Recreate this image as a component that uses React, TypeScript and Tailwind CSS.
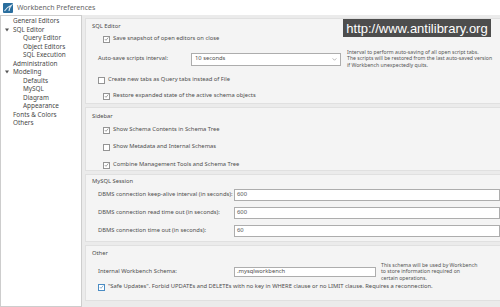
import clsx from 'clsx';

type TreeItem = { label: string; level: 0 | 1; open?: boolean };

const TREE: TreeItem[] = [
  { label: 'General Editors', level: 0 },
  { label: 'SQL Editor', level: 0, open: true },
  { label: 'Query Editor', level: 1 },
  { label: 'Object Editors', level: 1 },
  { label: 'SQL Execution', level: 1 },
  { label: 'Administration', level: 0 },
  { label: 'Modeling', level: 0, open: true },
  { label: 'Defaults', level: 1 },
  { label: 'MySQL', level: 1 },
  { label: 'Diagram', level: 1 },
  { label: 'Appearance', level: 1 },
  { label: 'Fonts & Colors', level: 0 },
  { label: 'Others', level: 0 },
];

function Check({ checked, blue }: { checked?: boolean; blue?: boolean }) {
  return (
    <span
      className={clsx(
        'flex h-[7px] w-[7px] shrink-0 items-center justify-center border bg-white',
        blue ? 'border-[#4a8cc4]' : 'border-[#949494]'
      )}
    >
      {checked && (
        <svg viewBox="0 0 8 8" className="h-[6px] w-[6px]">
          <path d="M1.3 4.1 L3.2 6.1 L6.9 1.5" fill="none" stroke={blue ? '#3a76ad' : '#5a5a5a'} strokeWidth="0.9" />
        </svg>
      )}
    </span>
  );
}

function CheckRow({ label, checked, blue, indent }: { label: string; checked?: boolean; blue?: boolean; indent?: boolean }) {
  return (
    <div className={clsx('flex h-[10px] items-center gap-[3px]', indent ? 'pl-[17px]' : 'pl-[12px]')}>
      <Check checked={checked} blue={blue} />
      <span>{label}</span>
    </div>
  );
}

function Heading({ children, h }: { children: string; h: string }) {
  return <div className={clsx('flex items-center pl-[6px] text-[#4c4c4c]', h)}>{children}</div>;
}

function Field({ label, value, width }: { label: string; value: string; width?: string }) {
  return (
    <div className="flex h-[12px] items-center">
      <span className="w-[148px] shrink-0 pl-[12px]">{label}</span>
      <div className={clsx('flex h-[12px] items-center border border-[#adadad] bg-white pl-[2px]', width ?? 'flex-1')}>
        {value}
      </div>
    </div>
  );
}

export default function App() {
  return (
    <div
      className="relative flex h-[307px] w-[500px] flex-col overflow-hidden bg-[#ebebeb] text-[5.8px] leading-none text-[#4e4e4e]"
      style={{ fontFamily: '"Noto Sans", "Open Sans", sans-serif' }}
    >
      {/* Title bar */}
      <div className="flex h-[15px] shrink-0 items-center gap-[4px] bg-white pl-[3px]">
        <svg viewBox="0 0 10 10" className="h-[10px] w-[10px]">
          <rect x="0" y="0" width="10" height="10" rx="1" fill="#2a6e9e" />
          <path d="M1.5 8 C3 5.5 5 3.5 8.5 2.2 C7 4 6.2 5.6 6 8" fill="none" stroke="#dbe9f3" strokeWidth="1.1" />
        </svg>
        <span className="text-[7px] text-[#666]">Workbench Preferences</span>
      </div>

      <div className="flex flex-1">
        {/* Tree */}
        <div className="w-[82px] shrink-0 border border-[#cdcdcd] bg-white pt-[1px] text-[6.4px] text-[#474747]">
          {TREE.map((item) => (
            <div key={item.label} className="flex h-[8.5px] items-center">
              {item.level === 0 ? (
                <span className="flex w-[12px] justify-center">
                  {item.open && (
                    <svg viewBox="0 0 4 4" className="h-[4px] w-[4px]">
                      <path d="M0 0.6 L4 0.6 L2 3.6 Z" fill="#555" />
                    </svg>
                  )}
                </span>
              ) : (
                <span className="w-[22px]" />
              )}
              <span>{item.label}</span>
            </div>
          ))}
        </div>

        {/* Settings */}
        <div className="flex flex-1 flex-col gap-[3px] pl-[3px] pt-[3px]">
          {/* SQL Editor */}
          <div className="h-[86px] border border-r-0 border-[#e0e0e0] bg-[#f4f4f4]">
            <Heading h="h-[15px]">SQL Editor</Heading>
            <CheckRow label="Save snapshot of open editors on close" checked indent />
            <div className="mt-[6px] flex h-[18px] items-center">
              <span className="w-[105px] shrink-0 pl-[12px]">Auto-save scripts interval:</span>
              <div className="flex h-[13px] w-[150px] shrink-0 items-center justify-between border border-[#adadad] bg-white px-[3px]">
                <span>10 seconds</span>
                <svg viewBox="0 0 6 4" className="h-[3px] w-[5px]">
                  <path d="M0.5 0.5 L3 3 L5.5 0.5" fill="none" stroke="#888" strokeWidth="0.8" />
                </svg>
              </div>
              <div className="ml-[6px] flex flex-col gap-[1.6px] text-[5.2px] whitespace-nowrap text-[#555]">
                <span>Interval to perform auto-saving of all open script tabs.</span>
                <span>The scripts will be restored from the last auto-saved version</span>
                <span>if Workbench unexpectedly quits.</span>
              </div>
            </div>
            <div className="mt-[7px]">
              <CheckRow label="Create new tabs as Query tabs instead of File" />
            </div>
            <div className="mt-[6px]">
              <CheckRow label="Restore expanded state of the active schema objects" checked indent />
            </div>
          </div>

          {/* Sidebar */}
          <div className="h-[64px] border border-r-0 border-[#e0e0e0] bg-[#f4f4f4]">
            <Heading h="h-[17px]">Sidebar</Heading>
            <CheckRow label="Show Schema Contents in Schema Tree" checked indent />
            <div className="mt-[7px]">
              <CheckRow label="Show Metadata and Internal Schemas" indent />
            </div>
            <div className="mt-[8px]">
              <CheckRow label="Combine Management Tools and Schema Tree" checked indent />
            </div>
          </div>

          {/* MySQL Session */}
          <div className="h-[68px] border border-r-0 border-[#e0e0e0] bg-[#f4f4f4]">
            <Heading h="h-[14px]">MySQL Session</Heading>
            <div className="flex flex-col gap-[6px]">
              <Field label="DBMS connection keep-alive interval (in seconds):" value="600" />
              <Field label="DBMS connection read time out (in seconds):" value="600" />
              <Field label="DBMS connection time out (in seconds):" value="60" />
            </div>
          </div>

          {/* Other */}
          <div className="h-[56px] border border-r-0 border-[#e0e0e0] bg-[#f4f4f4]">
            <Heading h="h-[16px]">Other</Heading>
            <div className="flex h-[20px] items-center">
              <span className="w-[148px] shrink-0 pl-[12px]">Internal Workbench Schema:</span>
              <div className="flex h-[10px] w-[142px] shrink-0 items-center border border-[#adadad] bg-white pl-[2px]">
                .mysqlworkbench
              </div>
              <div className="ml-[5px] flex flex-col gap-[1.6px] text-[5.2px] whitespace-nowrap text-[#555]">
                <span>This schema will be used by Workbench</span>
                <span>to store information required on</span>
                <span>certain operations.</span>
              </div>
            </div>
            <CheckRow
              label={'"Safe Updates". Forbid UPDATEs and DELETEs with no key in WHERE clause or no LIMIT clause. Requires a reconnection.'}
              checked
              blue
            />
          </div>
        </div>
      </div>

      {/* Watermark overlay */}
      <div
        className="absolute left-[343px] top-[19px] flex h-[18px] w-[148px] items-center justify-center bg-[#4d4d4d] text-[13px] text-white"
        style={{ fontFamily: '"Liberation Sans", Arial, sans-serif' }}
      >
        http://www.antilibrary.org
      </div>
    </div>
  );
}
